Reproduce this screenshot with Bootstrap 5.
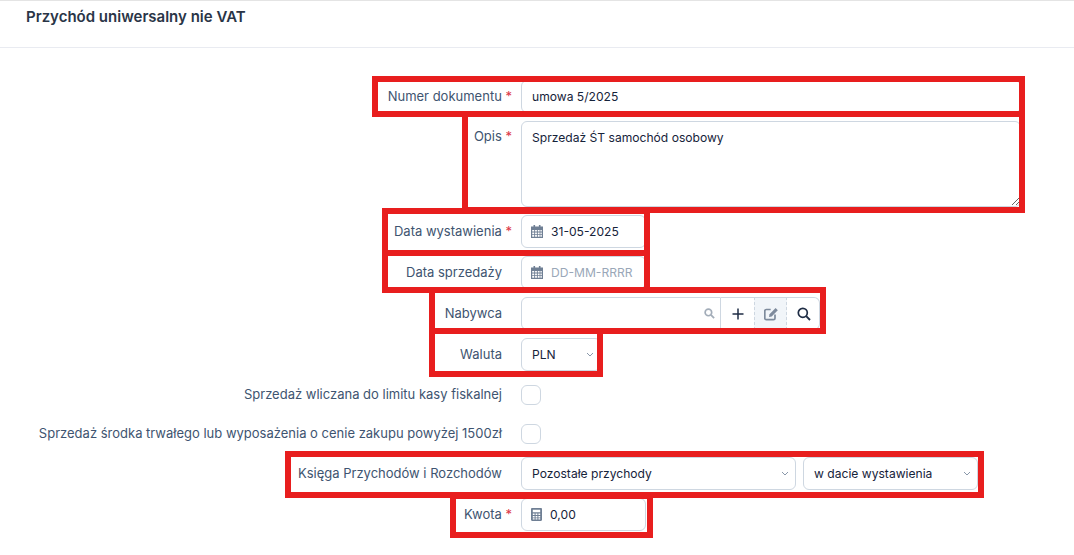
<!DOCTYPE html>
<html lang="pl">
<head>
<meta charset="utf-8">
<title>Przychód uniwersalny nie VAT</title>
<link href="https://cdn.jsdelivr.net/npm/bootstrap@5.3.0/dist/css/bootstrap.min.css" rel="stylesheet">
<style>
html, body { height: 555px; overflow: hidden; }
body { font-family: Inter, "Noto Sans", sans-serif; font-size: 13px; color: #1f2d45; background: #fff; position: relative; }
.page-head { height: 48px; border-top: 1px solid #e4e4e4; border-bottom: 1px solid #e9ebf1; padding: 7px 26px 0; }
.page-title { font-size: 15px; font-weight: 600; line-height: 17px; margin: 0; color: #2a3547; }
.form-area { padding-top: 32px; }
.frow { display: flex; align-items: center; margin-bottom: 8px; min-height: 33px; }
.frow.tall { align-items: flex-start; }
.frow.tall .flabel { padding-top: 7px; }
.frow.chk { min-height: 31px; }
.flabel { width: 502px; flex: none; text-align: right; color: #3e5470; margin: -2px 19px 0 0; line-height: 20px; }
.req { color: #dc3545; margin-right: -10px; }
.fctl { height: 33px; font-size: 12.1px; font-weight: 400; color: #16233a; border: 1px solid #ced7e1; border-radius: 6px; padding: 0 10px; line-height: 31px; box-shadow: none; }
.wide-ctl { width: 500px; padding-bottom: 1px; }
.tarea { width: 500px; height: 86px; padding: 6px 10px; line-height: 20px; }
.ico-field { width: 125px; display: flex; align-items: center; gap: 8px; padding-left: 9px; }
.ico-field svg { flex: none; }
.ico-field input { border: 0; outline: 0; padding: 0; width: 90px; font-size: 12.1px; font-weight: 400; color: #16233a; background: transparent; }
.ico-field input::placeholder { color: #9aa7b8; opacity: 1; }
.combo { display: flex; height: 33px; width: 299px; }
.combo-in { flex: 1; display: flex; align-items: center; justify-content: flex-end; border: 1px solid #ced7e1; border-radius: 6px 0 0 6px; padding-right: 5px; }
.cbtn { width: 33px; display: flex; align-items: center; justify-content: center; border-top: 1px solid #ced7e1; border-bottom: 1px solid #ced7e1; }
.cbtn.dash { background: #f1f5f9; border-left: 1px dashed #ced7e1; border-right: 1px dashed #ced7e1; padding-left: 1px; }
.cbtn.last { border-right: 1px solid #ced7e1; border-radius: 0 6px 6px 0; padding-left: 2px; }
.sel { appearance: none; background-color: #fff; background-image: url("data:image/svg+xml,%3csvg xmlns='http://www.w3.org/2000/svg' viewBox='0 0 8 5'%3e%3cpath fill='none' stroke='%238a98aa' stroke-width='1' d='M1 1l3 3 3-3'/%3e%3c/svg%3e"); background-repeat: no-repeat; background-position: right 6px center; background-size: 8px 5px; padding-right: 20px; }
.sel-cur { width: 80px; }
.sel-kat { width: 275px; margin-right: 7px; }
.sel-dat { width: 175px; }
.cbox { width: 20px; height: 20px; border: 1px solid #ced7e1; border-radius: 6px; margin: 0; appearance: none; display: block; background: #fff; }
.mark-box { position: absolute; border: 6px solid #e81e1e; pointer-events: none; }
</style>
</head>
<body>
<div class="page-head"><h1 class="page-title">Przychód uniwersalny nie VAT</h1></div>
<form class="form-area">
  <div class="frow">
    <label class="flabel">Numer dokumentu <span class="req">*</span></label>
    <input class="form-control fctl wide-ctl" value="umowa 5/2025">
  </div>
  <div class="frow tall">
    <label class="flabel">Opis <span class="req">*</span></label>
    <textarea class="form-control fctl tarea">Sprzedaż ŚT samochód osobowy</textarea>
  </div>
  <div class="frow">
    <label class="flabel">Data wystawienia <span class="req">*</span></label>
    <div class="fctl ico-field">
      <svg width="12" height="13" viewBox="0 0 12 13"><path fill="#6f7f94" d="M2.5 0h1.6v1.500h3.800V0h1.600v1.500H12V13H0V1.500h2.500z"/><path fill="#fff" d="M1.200 5h2v1.600h-2zM4.100 5h1.800v1.600H4.100zM6.800 5h1.800v1.600H6.800zM9.400 5h1.400v1.600H9.400zM1.200 7.600h2v1.600h-2zM4.100 7.600h1.800v1.600H4.100zM6.800 7.600h1.800v1.600H6.800zM9.400 7.600h1.400v1.600H9.400zM1.200 10.100h2v1.600h-2zM4.100 10.100h1.800v1.600H4.100zM6.800 10.100h1.800v1.600H6.800zM9.400 10.100h1.400v1.600H9.400z"/></svg>
      <input value="31-05-2025">
    </div>
  </div>
  <div class="frow">
    <label class="flabel">Data sprzedaży</label>
    <div class="fctl ico-field">
      <svg width="12" height="13" viewBox="0 0 12 13"><path fill="#6f7f94" d="M2.5 0h1.6v1.500h3.800V0h1.600v1.500H12V13H0V1.500h2.500z"/><path fill="#fff" d="M1.200 5h2v1.600h-2zM4.100 5h1.800v1.600H4.100zM6.800 5h1.800v1.600H6.800zM9.400 5h1.400v1.600H9.400zM1.200 7.600h2v1.600h-2zM4.100 7.600h1.800v1.600H4.100zM6.800 7.600h1.800v1.600H6.800zM9.400 7.600h1.400v1.600H9.400zM1.200 10.100h2v1.600h-2zM4.100 10.100h1.800v1.600H4.100zM6.800 10.100h1.800v1.600H6.800zM9.400 10.100h1.400v1.600H9.400z"/></svg>
      <input placeholder="DD-MM-RRRR">
    </div>
  </div>
  <div class="frow">
    <label class="flabel">Nabywca</label>
    <div class="combo">
      <div class="combo-in">
        <svg width="11" height="11" viewBox="0 0 10 10"><circle cx="4" cy="4" r="3" fill="none" stroke="#a3adb9" stroke-width="1.500"/><path d="M6.300 6.300L9.200 9.200" stroke="#a3adb9" stroke-width="1.600"/></svg>
      </div>
      <div class="cbtn"><svg width="12" height="12" viewBox="0 0 12 12"><path d="M6 .5v11M.5 6h11" stroke="#1f2d45" stroke-width="1.500"/></svg></div>
      <div class="cbtn dash"><svg width="15" height="14" viewBox="0 0 15 14"><path d="M11 7.500v3.700c0 .9-.6 1.500-1.500 1.500H2.300c-.9 0-1.500-.6-1.500-1.500V4c0-.9.6-1.500 1.500-1.500h4.400" fill="none" stroke="#7d8a9c" stroke-width="1.700"/><path d="M5.500 7.200L11.600 1.100 13.800 3.300 7.700 9.400 5 10z" fill="#7d8a9c"/></svg></div>
      <div class="cbtn last"><svg width="14" height="14" viewBox="0 0 14 14"><circle cx="5.800" cy="5.800" r="4.500" fill="none" stroke="#1f2d45" stroke-width="1.700"/><path d="M9.200 9.200L13 13" stroke="#1f2d45" stroke-width="1.900"/></svg></div>
    </div>
  </div>
  <div class="frow">
    <label class="flabel">Waluta</label>
    <select class="fctl sel sel-cur"><option>PLN</option></select>
  </div>
  <div class="frow chk">
    <label class="flabel">Sprzedaż wliczana do limitu kasy fiskalnej</label>
    <input type="checkbox" class="cbox">
  </div>
  <div class="frow chk">
    <label class="flabel">Sprzedaż środka trwałego lub wyposażenia o cenie zakupu powyżej 1500zł</label>
    <input type="checkbox" class="cbox">
  </div>
  <div class="frow">
    <label class="flabel">Księga Przychodów i Rozchodów</label>
    <select class="fctl sel sel-kat"><option>Pozostałe przychody</option></select>
    <select class="fctl sel sel-dat"><option>w dacie wystawienia</option></select>
  </div>
  <div class="frow">
    <label class="flabel">Kwota <span class="req">*</span></label>
    <div class="fctl ico-field">
      <svg width="11" height="13" viewBox="0 0 11 13"><path fill="#6f7f94" d="M1.200 0h8.600c.7 0 1.200.5 1.200 1.200v10.600c0 .7-.5 1.200-1.200 1.200H1.200C.5 13 0 12.500 0 11.800V1.200C0 .5.500 0 1.200 0z"/><path fill="#fff" d="M1.800 1.800h7.400v2.400H1.800zM1.800 5.500h1.800v1.500H1.800zM4.600 5.500h1.800v1.500H4.600zM7.400 5.500h1.800v1.500H7.400zM1.800 8h1.800v1.500H1.800zM4.600 8h1.800v1.500H4.600zM7.400 8h1.800v1.500H7.400zM1.800 10.300h1.800v1.200H1.800zM4.600 10.300h1.800v1.200H4.600zM7.400 10.300h1.800v1.200H7.400z"/></svg>
      <input value="0,00">
    </div>
  </div>
</form>
<div class="mark-box" style="left:372px;top:76px;width:653px;height:41px"></div>
<div class="mark-box" style="left:462px;top:111px;width:563px;height:102px"></div>
<div class="mark-box" style="left:382px;top:208px;width:268px;height:48px"></div>
<div class="mark-box" style="left:382px;top:250px;width:268px;height:43px"></div>
<div class="mark-box" style="left:429px;top:287px;width:397px;height:47px"></div>
<div class="mark-box" style="left:429px;top:328px;width:174px;height:49px"></div>
<div class="mark-box" style="left:285px;top:451px;width:699px;height:47px"></div>
<div class="mark-box" style="left:450px;top:493px;width:203px;height:45px"></div>
<script src="https://cdn.jsdelivr.net/npm/bootstrap@5.3.0/dist/js/bootstrap.bundle.min.js"></script>
</body>
</html>
